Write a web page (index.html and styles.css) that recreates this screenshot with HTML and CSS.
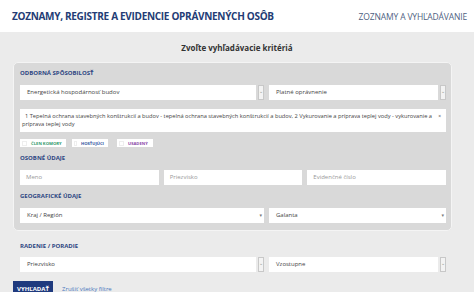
FILE: index.html
```html
<!DOCTYPE html>
<html lang="sk">
<head>
<meta charset="utf-8">
<link rel="stylesheet" href="styles.css">
</head>
<body>
<header class="top">
  <h1 class="title">ZOZNAMY, REGISTRE A EVIDENCIE OPRÁVNENÝCH OSÔB</h1>
  <nav class="nav">ZOZNAMY A VYHĽADÁVANIE</nav>
</header>
<main class="main">
  <h2 class="heading">Zvoľte vyhľadávacie kritériá</h2>
  <section class="panel">
    <div class="label">ODBORNÁ SPÔSOBILOSŤ</div>
    <div class="row2">
      <div class="sel"><span class="field">Energetická hospodárnosť budov</span><span class="arrowbox">⌄</span></div>
      <div class="sel"><span class="field">Platné oprávnenie</span><span class="arrowbox">⌄</span></div>
    </div>
    <div class="multi">
      <span class="multitext">1 Tepelná ochrana stavebných konštrukcií a budov - tepelná ochrana stavebných konštrukcií a budov, 2 Vykurovanie a príprava teplej vody - vykurovanie a príprava teplej vody</span>
      <span class="x">×</span>
    </div>
    <div class="checks">
      <span class="chk"><span class="box"></span><span class="ct green">ČLEN KOMORY</span></span>
      <span class="chk"><span class="box"></span><span class="ct blue">HOSŤUJÚCI</span></span>
      <span class="chk"><span class="box"></span><span class="ct purple">USADENÝ</span></span>
    </div>
    <div class="label">OSOBNÉ ÚDAJE</div>
    <div class="row3">
      <span class="input">Meno</span>
      <span class="input">Priezvisko</span>
      <span class="input">Evidenčné číslo</span>
    </div>
    <div class="label">GEOGRAFICKÉ ÚDAJE</div>
    <div class="row2 geo">
      <div class="sel"><span class="field">Kraj / Región<span class="tri">▾</span></span></div>
      <div class="sel"><span class="field">Galanta<span class="tri">▾</span></span></div>
    </div>
  </section>
  <div class="sort">
    <div class="label">RADENIE / PORADIE</div>
    <div class="row2 sortrow">
      <div class="sel"><span class="field">Priezvisko</span><span class="arrowbox">⌄</span></div>
      <div class="sel"><span class="field">Vzostupne</span><span class="arrowbox">⌄</span></div>
    </div>
  </div>
  <div class="actions">
    <button class="btn">VYHĽADAŤ</button>
    <a class="link">Zrušiť všetky filtre</a>
  </div>
</main>
</body>
</html>
```
FILE: styles.css
```css
* { box-sizing: border-box; }
html, body { margin: 0; padding: 0; }
body {
  width: 474px;
  height: 292px;
  overflow: hidden;
  font-family: "Open Sans", "DejaVu Sans", sans-serif;
  background: #ebebeb;
  color: #555;
}
.top {
  height: 32px;
  background: #fff;
  display: flex;
  align-items: center;
  justify-content: space-between;
  padding: 0 7px 0 12px;
}
.title {
  margin: 0;
  font-size: 10px;
  font-weight: 700;
  color: #243c75;
  letter-spacing: -0.3px;
  white-space: nowrap;
}
.nav {
  font-size: 8.5px;
  color: #4f5f82;
  letter-spacing: -0.15px;
}
.main {
  background: #ebebeb;
  padding: 9px 0 0 0;
}
.heading {
  margin: 0;
  text-align: center;
  font-size: 8px;
  font-weight: 700;
  color: #333;
  line-height: 14px;
  height: 21px;
}
.panel {
  margin: 0 22px 0 13px;
  background: #d9d9d9;
  border: 1px solid #f4f4f4;
  border-radius: 5px;
  padding: 5px 5px 7px 6px;
}
.label {
  font-size: 6px;
  font-weight: 700;
  color: #2d4682;
  line-height: 8px;
  height: 17px;
  padding-top: 1px;
}
.row2 {
  display: grid;
  grid-template-columns: 244px 1fr;
  gap: 5px;
  height: 15px;
}
.sel {
  display: flex;
  gap: 2px;
  height: 15px;
}
.field {
  flex: 1;
  background: #fff;
  font-size: 6px;
  line-height: 15px;
  padding-left: 7px;
  color: #444;
  display: flex;
  justify-content: space-between;
  padding-right: 2px;
}
.arrowbox {
  width: 6px;
  background: #f3f3f3;
  border: 1px solid #c8c8c8;
  font-size: 5px;
  line-height: 10px;
  text-align: center;
  color: #888;
}
.tri { font-size: 5px; color: #777; }
.multi {
  margin-top: 9px;
  background: #fff;
  height: 23px;
  padding: 3px 9px 0 2px;
  position: relative;
  font-size: 5.7px;
  line-height: 8px;
  color: #444;
}
.multitext { display: block; text-indent: 3px; }
.x {
  position: absolute;
  right: 5px;
  top: 3px;
  font-size: 5px;
}
.checks {
  display: flex;
  gap: 6px;
  margin-top: 7px;
  height: 14px;
}
.chk {
  display: flex;
  align-items: center;
  gap: 4px;
  background: #fff;
  height: 8px;
  padding: 0 4px 0 2px;
}
.box {
  width: 5px;
  height: 5px;
  border: 1px solid #eee;
}
.ct {
  font-size: 4.2px;
  font-weight: 700;
}
.chk:nth-child(1) { width: 46px; }
.chk:nth-child(2) { width: 36px; }
.chk:nth-child(3) { width: 36px; margin-left: 3px; }
.green { color: #2f9a6b; }
.blue { color: #33549e; }
.purple { color: #8a47a8; }
.row3 {
  display: grid;
  grid-template-columns: 1fr 1fr 1fr;
  gap: 5px;
  height: 15px;
  margin-bottom: 6px;
}
.input {
  background: #fff;
  font-size: 6px;
  line-height: 15px;
  padding-left: 6px;
  color: #999;
}
.geo .field { color: #444; }
.sort {
  padding: 10px 28px 0 20px;
}
.sort .label { height: 16px; }
.actions {
  display: flex;
  align-items: center;
  gap: 9px;
  padding: 9px 0 0 13px;
}
.btn {
  border: 0;
  background: #1f3a7e;
  color: #fff;
  font-family: inherit;
  font-size: 6px;
  font-weight: 700;
  height: 15px;
  width: 40px;
  padding: 0;
}
.link {
  font-size: 6px;
  color: #4a78be;
}
```
